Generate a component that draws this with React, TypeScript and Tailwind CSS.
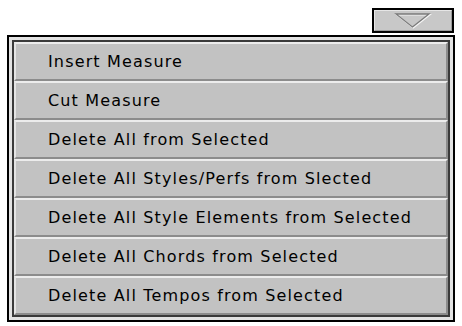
const items = [
  "Insert Measure",
  "Cut Measure",
  "Delete All from Selected",
  "Delete All Styles/Perfs from Slected",
  "Delete All Style Elements from Selected",
  "Delete All Chords from Selected",
  "Delete All Tempos from Selected",
];

export default function App() {
  return (
    <div className="w-[462px] h-[326px] bg-white relative" style={{ fontFamily: '"DejaVu Sans", sans-serif' }}>
      {/* dropdown button */}
      <div className="flex justify-end pr-[8px] pt-[8px]">
        <div className="w-[82px] h-[25px] border-2 border-black bg-[#c8c8c8] flex items-center justify-center">
          <div className="w-full h-full border-t border-l border-[#e6e6e6] border-b border-r border-b-[#9a9a9a] border-r-[#9a9a9a] flex items-center justify-center">
            <svg width="38" height="17" viewBox="0 0 38 17">
              <path d="M2 2 L35 2 L18.5 15 Z" fill="none" stroke="#f4f4f4" strokeWidth="1.5" transform="translate(0.8,0.8)" />
              <path d="M2 2 L35 2 L18.5 15 Z" fill="none" stroke="#7a7a7a" strokeWidth="1.3" />
            </svg>
          </div>
        </div>
      </div>

      {/* menu */}
      <div className="mx-[7px] mt-[2px] border-2 border-black bg-[#e2e2e2] p-[3px]">
        <div className="border-2 border-[#3a3a3a] flex flex-col">
          {items.map((t) => (
            <div
              key={t}
              className="h-[39px] flex items-center pl-[32px] bg-[#c2c2c2] border-t-2 border-t-[#ececec] border-l-2 border-l-[#e4e4e4] border-b-2 border-b-[#8c8c8c] border-r-2 border-r-[#8c8c8c] text-[16px] text-black tracking-[1.15px]"
            >
              {t}
            </div>
          ))}
        </div>
      </div>
    </div>
  );
}
